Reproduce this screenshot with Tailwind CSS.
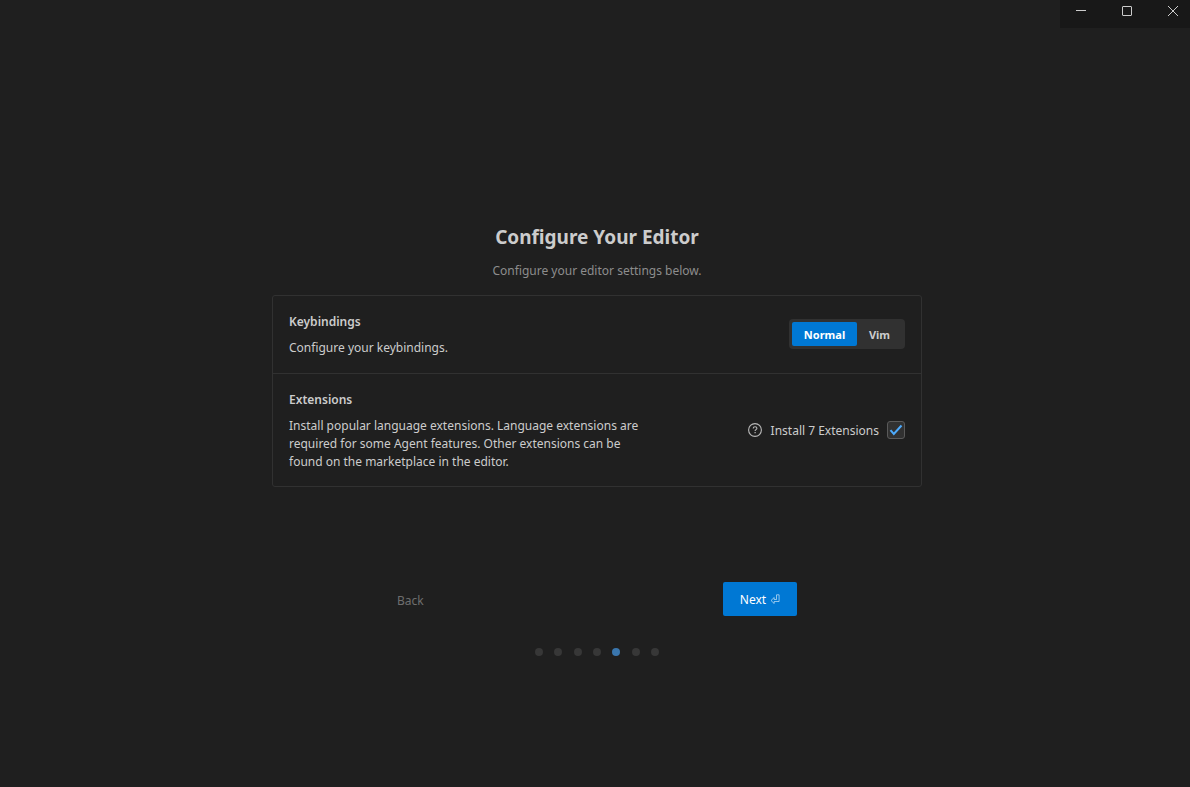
<!DOCTYPE html>
<html lang="en">
<head>
    <meta charset="UTF-8">
    <meta name="viewport" content="width=device-width, initial-scale=1.0">
    <title>Configure Your Editor</title>
    <script src="https://cdn.jsdelivr.net/npm/@tailwindcss/browser@4"></script>
</head>
<body class="min-h-screen bg-[#1f1f1f] text-[#cccccc] font-['Noto_Sans','Open_Sans',sans-serif] text-[12px] leading-[18px] select-none">
    <!-- Window controls -->
    <header class="flex justify-end">
        <div class="flex h-7 items-start gap-9 bg-[#181818] pt-[6px] pr-3 pl-4">
            <button type="button" aria-label="Minimize">
                <svg class="size-[10px]" viewBox="0 0 10 10" fill="none" stroke="currentColor" shape-rendering="crispEdges"><path d="M0 4.5h10"/></svg>
            </button>
            <button type="button" aria-label="Maximize">
                <svg class="size-[10px]" viewBox="0 0 10 10" fill="none" stroke="currentColor"><rect x=".5" y=".5" width="9" height="9" rx=".5"/></svg>
            </button>
            <button type="button" aria-label="Close">
                <svg class="size-[10px]" viewBox="0 0 10 10" fill="none" stroke="currentColor"><path d="M0 0l10 10M10 0L0 10"/></svg>
            </button>
        </div>
    </header>

    <main class="flex flex-col items-center pt-[194px] pl-1">
        <h1 class="text-[19px] leading-[30px] font-bold">Configure Your Editor</h1>
        <p class="mt-[10px] text-[#8d8d8d]">Configure your editor settings below.</p>

        <div class="mt-[15px] w-full max-w-[650px] rounded-[3px] border border-[#313131]">
            <section class="flex items-center justify-between border-b border-[#313131] px-4 pt-[17px] pb-4">
                <div>
                    <h2 class="font-semibold">Keybindings</h2>
                    <p class="mt-2">Configure your keybindings.</p>
                </div>
                <div role="radiogroup" aria-label="Keybindings" class="-mt-[10px] -mb-2 flex rounded-[4px] bg-[#313131] p-[3px] text-[11px] font-bold">
                    <label class="flex h-6 w-[65px] items-center justify-center rounded-[2px] pt-px has-checked:bg-[#0078d4] has-checked:text-white">
                        <input type="radio" name="keybindings" value="normal" class="sr-only" checked>
                        Normal
                    </label>
                    <label class="flex h-6 w-[45px] items-center justify-center rounded-[2px] pt-px has-checked:bg-[#0078d4] has-checked:text-white">
                        <input type="radio" name="keybindings" value="vim" class="sr-only">
                        Vim
                    </label>
                </div>
            </section>

            <section class="flex items-center justify-between px-4 pt-[17px] pb-[15px]">
                <div>
                    <h2 class="font-semibold">Extensions</h2>
                    <p class="mt-2 max-w-[360px]">Install popular language extensions. Language extensions are required for some Agent features. Other extensions can be found on the marketplace in the editor.</p>
                </div>
                <div class="flex items-center gap-2 pb-[2px]">
                    <svg class="size-4 text-[#b8b8b8]" viewBox="0 0 16 16" fill="none" stroke="currentColor" stroke-width="1.1">
                        <circle cx="8" cy="8" r="6.4"/>
                        <path d="M6.200 6.400c0-1.100.8-1.700 1.900-1.700s1.800.7 1.800 1.600c0 1.400-1.800 1.300-1.800 2.700"/>
                        <path d="M7.500 10.600h1.200" stroke-width="1.200"/>
                    </svg>
                    <label for="install-extensions" class="pt-[2px]">Install 7 Extensions</label>
                    <span class="grid size-[18px]">
                        <input type="checkbox" id="install-extensions" class="peer col-start-1 row-start-1 size-[18px] appearance-none rounded-[3px] border border-[#5a5a5a] bg-[#313131]" checked>
                        <svg class="pointer-events-none invisible col-start-1 row-start-1 size-[18px] peer-checked:visible" viewBox="0 0 18 18" fill="none" stroke="#4daafc" stroke-width="2"><path d="M3.500 9.200l3.300 3.700L14.500 4.500"/></svg>
                    </span>
                </div>
            </section>
        </div>

        <div class="mt-[95px] flex w-full max-w-[400px] items-center justify-between">
            <button type="button" class="pt-1 text-[#6e6e6e]">Back</button>
            <button type="button" class="flex h-[34px] w-[74px] items-center justify-center gap-1 rounded-[2px] bg-[#0078d4] text-white">
                <span class="pt-[2px]">Next</span>
                <svg class="size-[10px] text-white/70" viewBox="0 0 10 10" fill="none" stroke="currentColor" stroke-width=".8"><path d="M6.500 .8h2.600v6.700H4.200v2L1 6.500l3.200-3v2h2.300z"/></svg>
            </button>
        </div>

        <div class="mt-8 flex w-[124px] justify-between">
            <span class="size-2 rounded-full bg-[#373737]"></span>
            <span class="size-2 rounded-full bg-[#373737]"></span>
            <span class="size-2 rounded-full bg-[#373737]"></span>
            <span class="size-2 rounded-full bg-[#373737]"></span>
            <span class="size-2 rounded-full bg-[#3a76ad]"></span>
            <span class="size-2 rounded-full bg-[#373737]"></span>
            <span class="size-2 rounded-full bg-[#373737]"></span>
        </div>
    </main>
</body>
</html>
